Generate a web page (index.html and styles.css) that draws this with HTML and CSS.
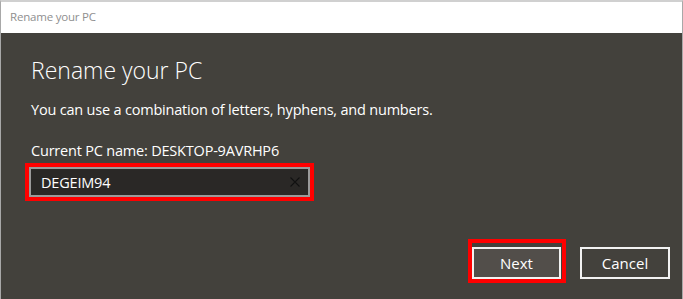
FILE: index.html
```html
<!doctype html>
<html>
<head>
<meta charset="utf-8">
<title>Rename your PC</title>
<link rel="stylesheet" href="styles.css">
</head>
<body>
<div class="window">
  <div class="titlebar">Rename your PC</div>
  <div class="content">
    <h1 class="heading">Rename your PC</h1>
    <p class="hint">You can use a combination of letters, hyphens, and numbers.</p>
    <div class="label">Current PC name: DESKTOP-9AVRHP6</div>
    <div class="mark field-mark">
      <div class="field">
        <span class="value">DEGEIM94</span>
        <svg class="clear" width="10" height="10" viewBox="0 0 10 10">
          <path d="M0.5 0.5 L9.5 9.5 M9.5 0.5 L0.5 9.5" stroke="#111" stroke-width="1.1" fill="none"/>
        </svg>
      </div>
    </div>
    <div class="actions">
      <span class="mark btn-mark"><button class="btn primary">Next</button></span>
      <button class="btn cancel">Cancel</button>
    </div>
  </div>
</div>
</body>
</html>
```

FILE: styles.css
```css
body {
	margin: 0;
	font-family: "Open Sans", "Noto Sans", sans-serif;
	background: #43413c;
}
.window {
	width: 681px;
	height: 299px;
	border-left: 1px solid #a8a8a8;
	border-right: 1px solid #a8a8a8;
	border-top: 2px solid #d0d0d0;
	background: #43413c;
	overflow: hidden;
}
.titlebar {
	height: 31px;
	line-height: 30px;
	background: #fff;
	color: #8f8f8f;
	font-size: 11.5px;
	letter-spacing: -0.2px;
	padding-left: 9px;
}
.content {
	padding: 22px 12px 0 30px;
	color: #fff;
}
.heading {
	margin: 0;
	font-size: 23px;
	font-weight: 300;
	line-height: 30px;
}
.hint {
	margin: 15px 0 0;
	font-size: 14.5px;
	letter-spacing: -0.2px;
	line-height: 20px;
}
.label {
	margin-top: 21px;
	font-size: 14.5px;
	letter-spacing: -0.2px;
	line-height: 20px;
}
.mark {
	border: 4px solid #ff0000;
}
.field-mark {
	width: 281px;
	margin: 2px 0 0 -6px;
}
.field {
	height: 26px;
	border: 2px solid #9a9a9a;
	background: #2a2826;
	display: flex;
	align-items: center;
	justify-content: space-between;
	padding: 0 8px 0 10px;
}
.value {
	font-size: 14.5px;
	letter-spacing: -0.2px;
	color: #fff;
}
.actions {
	display: flex;
	justify-content: flex-end;
	align-items: flex-start;
	gap: 14px;
	margin-top: 38px;
}
.btn-mark {
	display: block;
	padding: 4px 1px 0 0;
}
.btn {
	width: 90px;
	height: 32px;
	border: 2px solid #f2f2f2;
	background: #43413c;
	color: #fff;
	font-family: "Open Sans", "Noto Sans", sans-serif;
	font-size: 15px;
	padding: 0;
	display: block;
}
.primary {
	width: 89px;
	background: #524e4a;
}
.cancel {
	margin-top: 8px;
}
```
